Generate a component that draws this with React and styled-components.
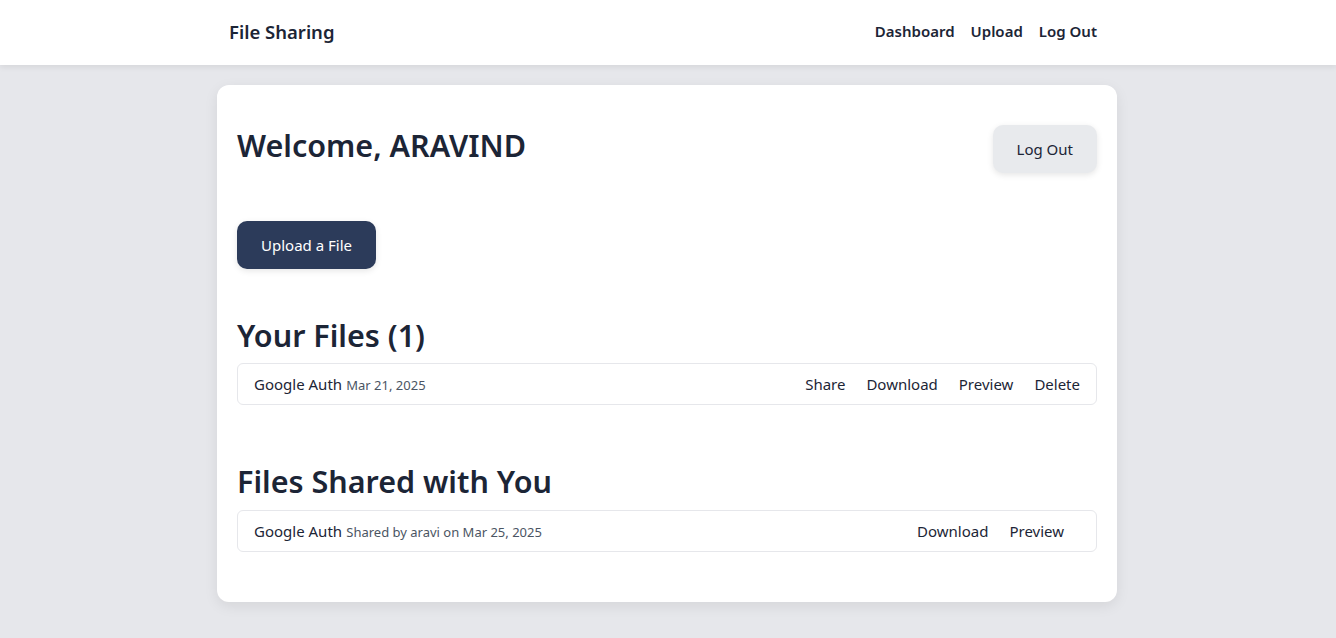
import React from "react";
import styled, { createGlobalStyle } from "styled-components";

const GlobalStyle = createGlobalStyle`
  body {
    margin: 0;
    background: #e6e7eb;
    font-family: "Noto Sans", "Open Sans", Arial, sans-serif;
    color: #1c2536;
  }
`;

const Navbar = styled.nav`
  height: 65px;
  background: #fff;
  box-shadow: 0 2px 6px rgba(0, 0, 0, 0.08);
  display: flex;
  justify-content: center;
`;

const NavInner = styled.div`
  width: 900px;
  box-sizing: border-box;
  padding: 0 20px 3px 12px;
  margin-left: -2px;
  display: flex;
  justify-content: space-between;
  align-items: center;
`;

const Brand = styled.div`
  font-size: 18.5px;
  font-weight: 600;
`;

const NavLinks = styled.div`
  display: flex;
  gap: 16px;
`;

const NavLink = styled.a`
  font-size: 15px;
  font-weight: 600;
  color: #1c2536;
  text-decoration: none;
`;

const Card = styled.main`
  width: 900px;
  box-sizing: border-box;
  margin: 20px auto;
  position: relative;
  left: -1px;
  background: #fff;
  border-radius: 12px;
  box-shadow: 0 4px 14px rgba(0, 0, 0, 0.08);
  padding: 41px 20px 50px;
`;

const Header = styled.div`
  display: flex;
  justify-content: space-between;
  align-items: flex-start;
`;

const Title = styled.h1`
  margin: 0;
  font-size: 30.5px;
  line-height: 38px;
  font-weight: 600;
`;

const Button = styled.button`
  height: 48px;
  border: none;
  border-radius: 10px;
  padding: 0 24px;
  font-family: inherit;
  font-size: 15px;
  cursor: pointer;
  background: ${p => (p.$primary ? "#2c3b5a" : "#e8eaed")};
  color: ${p => (p.$primary ? "#fff" : "#1c2536")};
  box-shadow: 0 2px 6px rgba(0, 0, 0, 0.1);
  margin-top: ${p => p.$top || "0"};
`;

const Section = styled.section`
  margin-top: ${p => p.$top};
`;

const SectionTitle = styled.h2`
  margin: 0 0 ${p => p.$gap || "9px"};
  font-size: 30.5px;
  line-height: 38px;
  font-weight: 600;
`;

const FileRow = styled.div`
  height: 42px;
  box-sizing: border-box;
  border: 1px solid #e6e7eb;
  border-radius: 6px;
  padding: 0 16px;
  display: flex;
  justify-content: space-between;
  align-items: center;
`;

const FileName = styled.span`
  font-size: 15px;
`;

const Meta = styled.span`
  font-size: 13px;
  color: #4b5563;
`;

const Actions = styled.div`
  display: flex;
  gap: 21px;
  margin-right: ${p => p.$end || "0"};
`;

const Action = styled.a`
  font-size: 15px;
  color: #1c2536;
  cursor: pointer;
`;

export default function App() {
  return (
    <>
      <GlobalStyle />
      <Navbar>
        <NavInner>
          <Brand>File Sharing</Brand>
          <NavLinks>
            <NavLink>Dashboard</NavLink>
            <NavLink>Upload</NavLink>
            <NavLink>Log Out</NavLink>
          </NavLinks>
        </NavInner>
      </Navbar>
      <Card>
        <Header>
          <Title>Welcome, ARAVIND</Title>
          <Button $top="-1px">Log Out</Button>
        </Header>
        <Section $top="48px">
          <Button $primary>Upload a File</Button>
        </Section>
        <Section $top="47px">
          <SectionTitle>Your Files (1)</SectionTitle>
          <FileRow>
            <span>
              <FileName>Google Auth</FileName> <Meta>Mar 21, 2025</Meta>
            </span>
            <Actions>
              <Action>Share</Action>
              <Action>Download</Action>
              <Action>Preview</Action>
              <Action>Delete</Action>
            </Actions>
          </FileRow>
        </Section>
        <Section $top="57px">
          <SectionTitle $gap="10px">Files Shared with You</SectionTitle>
          <FileRow>
            <span>
              <FileName>Google Auth</FileName> <Meta>Shared by aravi on Mar 25, 2025</Meta>
            </span>
            <Actions $end="16px">
              <Action>Download</Action>
              <Action>Preview</Action>
            </Actions>
          </FileRow>
        </Section>
      </Card>
    </>
  );
}
